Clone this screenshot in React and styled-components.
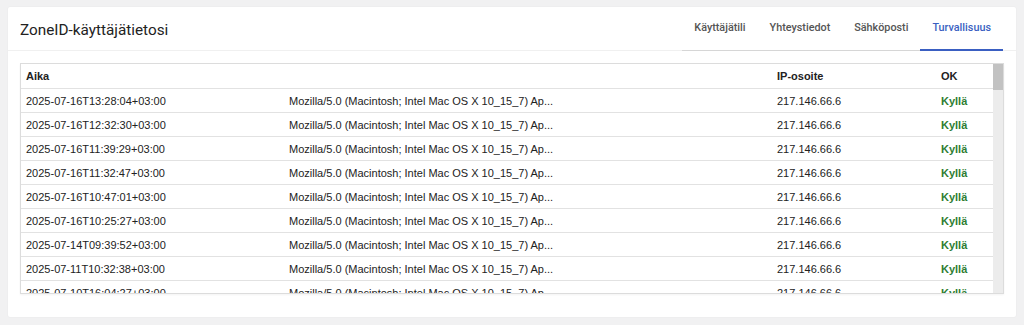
import styled, { createGlobalStyle } from 'styled-components';

const GlobalStyle = createGlobalStyle`
  html, body {
    margin: 0;
    padding: 0;
    background: #f1f1f2;
  }
  body {
    font-family: "Liberation Sans", Arial, sans-serif;
    color: #222;
  }
`;

const Page = styled.div`
  padding: 7px 8px 8px 8px;
`;

const Card = styled.div`
  background: #ffffff;
  border-radius: 2px;
  box-shadow: 0 0 2px rgba(0, 0, 0, 0.06);
  height: 310px;
  display: flex;
  flex-direction: column;
`;

const Header = styled.div`
  display: flex;
  align-items: stretch;
  justify-content: space-between;
  height: 43px;
  padding: 0 13px 0 12px;
  border-bottom: 1px solid #f0f0f0;
`;

const Title = styled.h1`
  margin: 0;
  align-self: center;
  font-family: Roboto, "Liberation Sans", sans-serif;
  font-size: 15.3px;
  font-weight: 400;
  color: #222;
  padding-top: 2px;
`;

const Tabs = styled.nav`
  display: flex;
  align-items: stretch;
  border-bottom: 1px solid #d6d6d6;
  margin-bottom: -1px;
`;

const Tab = styled.div`
  display: flex;
  align-items: center;
  padding: 0 12px 1px 12px;
  font-family: Roboto, "Liberation Sans", sans-serif;
  font-size: 10.8px;
  font-weight: 500;
  color: ${(p) => (p.$active ? '#3a5fc2' : '#555')};
  border-bottom: 2px solid ${(p) => (p.$active ? '#3a5fc2' : 'transparent')};
  margin-bottom: -1px;
  cursor: pointer;
`;

const Body = styled.div`
  flex: 1;
  padding: 12px 12px 23px 12px;
  min-height: 0;
  display: flex;
`;

const TableBox = styled.div`
  flex: 1;
  display: flex;
  min-height: 0;
  border: 1px solid #dcdcdc;
  box-shadow: 0 1px 2px rgba(0, 0, 0, 0.05);
`;

const Scroller = styled.div`
  flex: 1;
  overflow-y: auto;
  scrollbar-width: none;
  &::-webkit-scrollbar {
    display: none;
  }
`;

const ScrollTrack = styled.div`
  width: 10px;
  flex: none;
  background: #ececec;
  display: flex;
  flex-direction: column;
`;

const ScrollThumb = styled.div`
  height: 26px;
  background: #c2c2c2;
`;

const Table = styled.table`
  width: 100%;
  border-collapse: collapse;
  table-layout: fixed;
  font-size: 11px;
`;

const Th = styled.th`
  position: sticky;
  top: 0;
  background: #fff;
  text-align: left;
  font-weight: 700;
  color: #222;
  height: 24px;
  padding: 0 5px;
  border-bottom: 1px solid #e2e2e2;
`;

const Td = styled.td`
  height: 23px;
  padding: 0 5px;
  border-bottom: 1px solid #e2e2e2;
  white-space: nowrap;
  overflow: hidden;
  color: ${(p) => (p.$ok ? '#2e7d32' : '#222')};
  font-weight: ${(p) => (p.$ok ? 700 : 400)};
`;

const UA = 'Mozilla/5.0 (Macintosh; Intel Mac OS X 10_15_7) Ap...';

const times = [
  '2025-07-16T13:28:04+03:00',
  '2025-07-16T12:32:30+03:00',
  '2025-07-16T11:39:29+03:00',
  '2025-07-16T11:32:47+03:00',
  '2025-07-16T10:47:01+03:00',
  '2025-07-16T10:25:27+03:00',
  '2025-07-14T09:39:52+03:00',
  '2025-07-11T10:32:38+03:00',
  '2025-07-10T16:04:27+03:00',
];

// older entries further down the scroll
const pad = (n) => String(n).padStart(2, '0');
for (let i = 0; i < 70; i++) {
  const day = 9 - Math.floor(i / 8);
  const month = day > 0 ? 7 : 6;
  const d = day > 0 ? day : 30 + day;
  const h = 17 - (i % 8);
  times.push(`2025-${pad(month)}-${pad(d)}T${pad(h)}:${pad((i * 17) % 60)}:${pad((i * 31) % 60)}+03:00`);
}

const rows = times.map((t) => ({ time: t, agent: UA, ip: '217.146.66.6', ok: 'Kyllä' }));

const tabs = ['Käyttäjätili', 'Yhteystiedot', 'Sähköposti', 'Turvallisuus'];

export default function App() {
  return (
    <>
      <GlobalStyle />
      <Page>
        <Card>
          <Header>
            <Title>ZoneID-käyttäjätietosi</Title>
            <Tabs>
              {tabs.map((t) => (
                <Tab key={t} $active={t === 'Turvallisuus'}>{t}</Tab>
              ))}
            </Tabs>
          </Header>
          <Body>
            <TableBox>
              <Scroller>
                <Table>
                  <colgroup>
                    <col style={{ width: 263 }} />
                    <col style={{ width: 488 }} />
                    <col style={{ width: 164 }} />
                    <col />
                  </colgroup>
                  <thead>
                    <tr>
                      <Th>Aika</Th>
                      <Th></Th>
                      <Th>IP-osoite</Th>
                      <Th>OK</Th>
                    </tr>
                  </thead>
                  <tbody>
                    {rows.map((r, i) => (
                      <tr key={i}>
                        <Td>{r.time}</Td>
                        <Td>{r.agent}</Td>
                        <Td>{r.ip}</Td>
                        <Td $ok>{r.ok}</Td>
                      </tr>
                    ))}
                  </tbody>
                </Table>
              </Scroller>
              <ScrollTrack>
                <ScrollThumb />
              </ScrollTrack>
            </TableBox>
          </Body>
        </Card>
      </Page>
    </>
  );
}
